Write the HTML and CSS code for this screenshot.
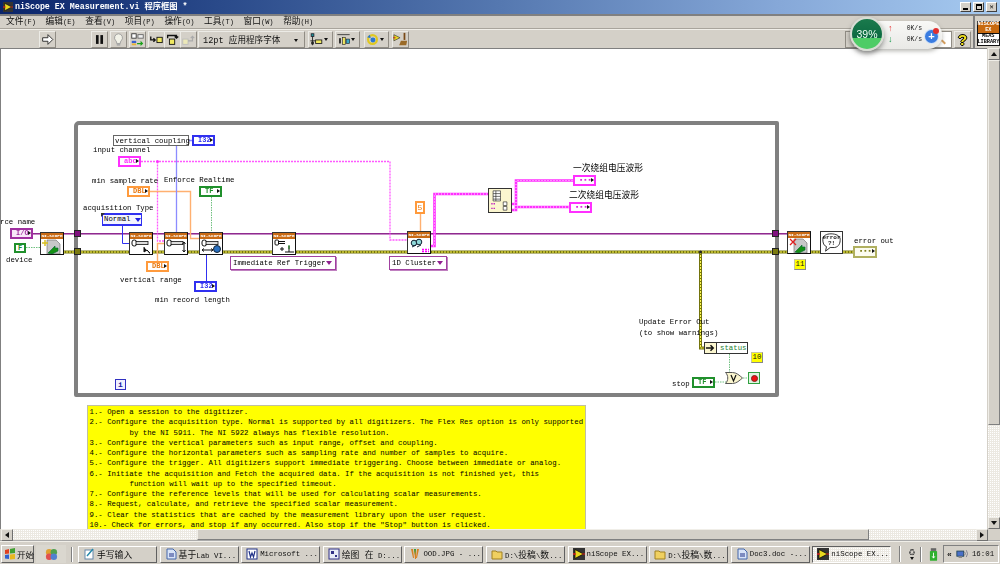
FILE: index.html
```html
<!DOCTYPE html>
<html lang="zh">
<head>
<meta charset="utf-8">
<title>niScope EX Measurement.vi 程序框图 *</title>
<link rel="stylesheet" href="styles.css">
</head>
<body>
<svg class="defs" width="0" height="0" aria-hidden="true">
  <symbol id="lv" viewBox="0 0 12 12"><rect width="12" height="12" fill="#333"/><path d="M2 1.500 10.500 6 2 10.500z" fill="#e8d820" stroke="#000" stroke-width=".7"/><path d="M0 6h3" stroke="#e02020" stroke-width="1.400"/><path d="M9 6h3" stroke="#e02020"/></symbol>
  <symbol id="key" viewBox="0 0 21 15"><rect x="1" y="1" width="4.500" height="6" rx="2" fill="#fff" stroke="#111"/><rect x="5" y="2.400" width="12" height="3.200" fill="#ddd" stroke="#111" stroke-width=".8"/></symbol>
  <symbol id="doc" viewBox="0 0 21 15"><path d="M5 1h9l4 4v10H5z" fill="#c8c8c8" stroke="#666" stroke-width=".6"/><path d="M6 14 13 7v2h3v3l-6 3z" fill="#149014" stroke="#063" stroke-width=".6"/></symbol>
</svg>

<header class="titlebar">
  <svg class="title-icon"><use href="#lv"/></svg>
  <span class="title-text">niScope EX Measurement.vi 程序框图 *</span>
  <div class="win-btns">
    <span class="win-btn"><i class="g-min"></i></span>
    <span class="win-btn"><i class="g-max"></i></span>
    <span class="win-btn g-x">✕</span>
  </div>
</header>

<div class="chrome">
  <div class="chrome-main">
    <nav class="menubar">
      <span>文件<small>(F)</small></span><span>编辑<small>(E)</small></span><span>查看<small>(V)</small></span><span>项目<small>(P)</small></span><span>操作<small>(O)</small></span><span>工具<small>(T)</small></span><span>窗口<small>(W)</small></span><span>帮助<small>(H)</small></span>
    </nav>
    <div class="toolbar">
      <button class="tb tb-run"><svg viewBox="0 0 17 17"><path d="M3 6.500h6V3l5.500 5.500L9 14v-3.500H3z" fill="#fff" stroke="#222"/></svg></button>
      <button class="tb tb-pause"><svg viewBox="0 0 17 17"><rect x="4.500" y="3.500" width="3" height="10" fill="#111"/><rect x="9.500" y="3.500" width="3" height="10" fill="#111"/></svg></button>
      <button class="tb"><svg viewBox="0 0 17 17"><path d="M8.500 2a4.600 4.600 0 0 0-3 8c.8.800 1 1.500 1 3h4c0-1.500.2-2.200 1-3a4.600 4.600 0 0 0-3-8z" fill="#f2f2e8" stroke="#999"/><rect x="6.500" y="13" width="4" height="2.500" fill="#aaa"/></svg></button>
      <button class="tb"><svg viewBox="0 0 17 17"><rect x="2" y="2" width="5" height="5" fill="#fff" stroke="#333"/><rect x="9" y="3" width="6" height="4" fill="#eee" stroke="#666"/><rect x="2" y="10" width="5" height="2.500" fill="#3a60d0"/><rect x="2" y="13" width="5" height="2" fill="#e8b030"/><path d="M8 12.500h4V10l3 3-3 3v-2H8z" fill="#18a018"/></svg></button>
      <div class="tb-group">
        <button class="tb"><svg viewBox="0 0 17 17"><path d="M2 5v4h5M5 7l2 2-2 2" fill="none" stroke="#111" stroke-width="1.500"/><rect x="9" y="6" width="6" height="6" fill="#f0e860" stroke="#111"/></svg></button>
        <button class="tb"><svg viewBox="0 0 17 17"><path d="M3 7V4h10v3M11 5l2 2 2-2" fill="none" stroke="#111" stroke-width="1.500"/><rect x="5" y="8" width="6" height="6" fill="#f0e860" stroke="#111"/></svg></button>
        <button class="tb"><svg viewBox="0 0 17 17"><rect x="2" y="8" width="6" height="6" fill="#ece8b8" stroke="#bbb"/><path d="M8 10h5V5M11 7l2-2 2 2" fill="none" stroke="#aaa" stroke-width="1.300"/></svg></button>
      </div>
      <div class="font-ring"><span>12pt 应用程序字体</span><i class="caret"></i></div>
      <button class="tb tb-wide tb-align"><svg viewBox="0 0 16 17"><rect x="2" y="2" width="3" height="3" fill="#1aa0a0" stroke="#223"/><path d="M3.500 5v10M1 10h13" stroke="#222"/><rect x="2" y="11" width="3" height="3" fill="#222"/><rect x="7" y="9" width="7" height="4" fill="#f0e860" stroke="#222"/></svg><i class="caret"></i></button>
      <button class="tb tb-wide"><svg viewBox="0 0 16 17"><path d="M1 3h14" stroke="#333"/><rect x="3" y="7" width="2" height="6" fill="#222"/><rect x="7" y="6" width="3" height="8" fill="#f0e860" stroke="#222" stroke-width=".7"/><rect x="11" y="8" width="4" height="5" fill="#3aa8c8" stroke="#222" stroke-width=".7"/></svg><i class="caret"></i></button>
      <button class="tb tb-wide tb-order"><svg viewBox="0 0 16 17"><circle cx="8" cy="8.500" r="5" fill="none" stroke="#e0c820" stroke-width="2.500"/><circle cx="8.500" cy="9" r="2.800" fill="#2a78d0"/><path d="M2 6 5 3 6 7z" fill="#2a78d0"/></svg><i class="caret"></i></button>
      <button class="tb"><svg viewBox="0 0 17 17"><path d="M1 3 8 6.500 1 10z" fill="#e8d820" stroke="#333" stroke-width=".7"/><path d="M0 6.500h3" stroke="#d02020"/><path d="M13 1v8" stroke="#7a4a18" stroke-width="2"/><path d="M7 15l2-5h7l-1 5z" fill="#9a6a28"/></svg></button>
      <div class="search-box"></div>
      <button class="tb tb-help">?</button>
    </div>
  </div>
  <div class="conpane">
    <div class="conpane-top">NISCOPE<br>EX</div>
    <div class="conpane-bot">MEAS<br>LIBRARY</div>
  </div>
</div>

<div class="work">
  <main class="canvas">
    <div class="loop"></div>

    <svg class="wires" viewBox="0 48 987 481">
      <path class="w-session" d="M33 233.500H787"/>
      <path class="w-session-lo" d="M33 234.500H787"/>
      <path class="w-err" d="M63 252H820M843 252H853M700.500 252V348H704"/>
      <path class="w-err-dot" d="M63 252H820M843 252H853M700.500 252V348H704"/>
      <path class="w-pink" d="M141 161.500H390V240H407M157.500 161.500V241H164"/>
      <path class="w-pink-t" d="M430 246H434.500V194H488M511 204H516V180.500H573M511 210H516V207H569"/>
      <path class="w-pink-c" d="M430 246H434.500V194H488M511 204H516V180.500H573M511 210H516V207H569"/>
      <path class="w-orange" d="M150 191.500H190.500V238.500H199M164 243.500H157.500V261M420.500 213V231"/>
      <path class="w-blue" d="M122.500 225V243.500H129M206.500 254V281"/>
      <path class="w-blue-l" d="M176.500 146V232M189 140.500H192"/>
      <path class="w-green" d="M26 247.500H40M211.500 197V232M729.500 354V373M715 382H726M743 378H748"/>
      <circle class="w-dot" cx="157.500" cy="161.500" r="1.500"/>
      <circle class="w-dot-err" cx="700.500" cy="252" r="1.500"/>
    </svg>

    <i class="tunnel tunnel-p tl-1"></i><i class="tunnel tunnel-e tl-2"></i>
    <i class="tunnel tunnel-p tl-3"></i><i class="tunnel tunnel-e tl-4"></i>

    <div class="node n-open"><div class="node-head">NI-SCOPE</div><svg class="node-ico"><use href="#doc"/><path d="M3 1v6M0 4h6" stroke="#d8c020" stroke-width="1.500"/></svg></div>
    <div class="node n-acq"><div class="node-head">NI-SCOPE</div><svg class="node-ico"><use href="#key"/><path d="M13 8v5l3-2 3 3h-1" fill="#111" stroke="#111"/></svg></div>
    <div class="node n-vert"><div class="node-head">NI-SCOPE</div><svg class="node-ico"><use href="#key"/><path d="M18 3v10M16.500 5 18 3l1.500 2M16.500 11 18 13l1.500-2" fill="none" stroke="#111"/></svg></div>
    <div class="node n-hor"><div class="node-head">NI-SCOPE</div><svg class="node-ico"><use href="#key"/><path d="M1 11h11M3 9.500 1 11l2 1.500M10 9.500l2 1.500-2 1.500" fill="none" stroke="#111"/><circle cx="16" cy="10" r="3.500" fill="#2a70c0" stroke="#123"/></svg></div>
    <div class="node n-trig"><div class="node-head">NI-SCOPE</div><svg class="node-ico"><rect x="1" y="1" width="3.500" height="5" rx="1" fill="#fff" stroke="#111"/><path d="M4 2.500h7M4 4.500h7" stroke="#111"/><path d="M6 10h4M8 8v4" stroke="#111"/><path d="M11 13h4V7M15 13h5" fill="none" stroke="#111"/><path d="M15 6v4" stroke="#108010"/></svg></div>
    <div class="node n-fetch"><div class="node-head">NI-SCOPE</div><svg class="node-ico"><circle cx="5" cy="5" r="2.800" fill="#8fd8d8" stroke="#123"/><circle cx="10" cy="4" r="2.800" fill="#8fd8d8" stroke="#123"/><path d="M3 9 7 7M8 9l4-2" stroke="#123"/><path d="M13 11.500h7M13 13.500h7" stroke="#f0f" stroke-width="1.500" stroke-dasharray="2 1"/></svg></div>
    <div class="node n-close"><div class="node-head">NI-SCOPE</div><svg class="node-ico"><use href="#doc"/><path d="M1 1l6 6M7 1 1 7" stroke="#e02020" stroke-width="1.300"/></svg></div>

    <div class="errh"><svg viewBox="0 0 23 23"><path d="M2 8c0-4 4-6 9-6s10 2 10 6-1 8-6 9l-5 0-5 4 1-5c-3-1-4-4-4-8z" fill="#fff" stroke="#222"/></svg><span class="errh-text">error<br>?!</span></div>

    <div class="bundle">
      <svg viewBox="0 0 23 25"><path d="M4 2h8v11H4zM4 5h8M4 8h8M4 11h8M7 2v11" fill="#fff" stroke="#222" stroke-width=".7"/><path d="M2 16h4M2 21h4" stroke="#c020c0" stroke-width="1.500" stroke-dasharray="1.500 1"/><path d="M15 14h4v4h-4zM15 19h4v4h-4z" fill="#fff" stroke="#222" stroke-width=".7"/></svg>
    </div>

    <div class="term t-io l-io">I/O</div>
    <div class="cbool l-f">F</div>
    <div class="term t-str l-chan">abc</div>
    <div class="term t-dbl l-rate">DBL</div>
    <div class="term t-tf l-enf">TF</div>
    <div class="term t-dbl l-range">DBL</div>
    <div class="term t-i32 l-coupi notched">I32</div>
    <div class="term t-i32 l-recl">I32</div>
    <div class="term t-wave l-w1">▪▪▪</div>
    <div class="term t-wave l-w2">▪▪▪</div>
    <div class="term t-err l-errout">▪▪▪</div>
    <div class="term t-tf l-stop">TF</div>

    <div class="coupling">vertical coupling</div>
    <div class="enum-blue notched"><span>Normal</span><i class="tri-blue"></i></div>
    <div class="ring-purple r-trig"><span>Immediate Ref Trigger</span><i class="tri-purple"></i></div>
    <div class="ring-purple r-clus"><span>1D Cluster</span><i class="tri-purple"></i></div>
    <div class="const5">5</div>

    <div class="step s-11">11</div>
    <div class="step s-10">10</div>
    <div class="iter">i</div>

    <div class="unbundle"><span class="ub-arrow"><svg viewBox="0 0 12 10"><path d="M1 5h7M6 2l3 3-3 3" fill="none" stroke="#111" stroke-width="1.600"/></svg></span><span class="ub-status">status</span></div>
    <svg class="orgate" viewBox="0 0 18 12"><path d="M.5.500h7c4 0 7 3 10 5.500-3 2.500-6 5.500-10 5.500h-7c3-3 3-8 0-11z" fill="#fbf6cf" stroke="#555"/><path d="M6 3l2.500 6L11 3" fill="none" stroke="#111" stroke-width="1.200"/></svg>
    <div class="stopind"><i></i></div>

    <span class="lbl a-rce">rce name</span>
    <span class="lbl a-dev">device</span>
    <span class="lbl a-chan">input channel</span>
    <span class="lbl a-rate">min sample rate</span>
    <span class="lbl a-enf">Enforce Realtime</span>
    <span class="lbl a-acq">acquisition Type</span>
    <span class="lbl a-vr">vertical range</span>
    <span class="lbl a-rec">min record length</span>
    <span class="lbl lbl-cjk a-w1">一次绕组电压波形</span>
    <span class="lbl lbl-cjk a-w2">二次绕组电压波形</span>
    <span class="lbl a-eo">error out</span>
    <span class="lbl a-up">Update Error Out<br>(to show warnings)</span>
    <span class="lbl a-stop">stop</span>

    <div class="note">
      <p>1.- Open a session to the digitizer.</p>
      <p>2.- Configure the acquisition type. Normal is supported by all digitizers. The Flex Res option is only supported</p>
      <p class="ind">by the NI 5911. The NI 5922 always has flexible resolution.</p>
      <p>3.- Configure the vertical parameters such as input range, offset and coupling.</p>
      <p>4.- Configure the horizontal parameters such as sampling rate and number of samples to acquire.</p>
      <p>5.- Configure the trigger. All digitizers support immediate triggering. Choose between immediate or analog.</p>
      <p>6.- Initiate the acquisition and Fetch the acquired data. If the acquisition is not finished yet, this</p>
      <p class="ind">function will wait up to the specified timeout.</p>
      <p>7.- Configure the reference levels that will be used for calculating scalar measurements.</p>
      <p>8.- Request, calculate, and retrieve the specified scalar measurement.</p>
      <p>9.- Clear the statistics that are cached by the measurement library upon the user request.</p>
      <p>10.- Check for errors, and stop if any occurred. Also stop if the "Stop" button is clicked.</p>
    </div>
  </main>
  <aside class="vscroll">
    <button class="sb-btn"><i class="tri tri-up"></i></button>
    <div class="sb-thumb-v"></div>
    <div class="sb-track"></div>
    <button class="sb-btn"><i class="tri tri-down"></i></button>
  </aside>
</div>

<div class="hscroll">
  <button class="sb-btn"><i class="tri tri-left"></i></button>
  <div class="sb-track t-left"></div>
  <div class="sb-thumb-h"></div>
  <div class="sb-track t-right"></div>
  <button class="sb-btn"><i class="tri tri-right"></i></button>
  <div class="sb-corner"></div>
</div>

<footer class="taskbar">
  <button class="start"><svg viewBox="0 0 12 12"><path d="M1 2l4-1v4.500l-4 .5z" fill="#e04020"/><path d="M6 1l5-1v5l-5 .5z" fill="#40a030"/><path d="M1 7l4-.5V11l-4-.5z" fill="#3060d0"/><path d="M6 6.500l5-.5v5l-5 .5z" fill="#e8b820"/></svg>开始</button>
  <div class="quick"><svg viewBox="0 0 14 14"><circle cx="4.500" cy="4.500" r="3.500" fill="#e0a030"/><circle cx="9.500" cy="4.500" r="3.500" fill="#50a050"/><circle cx="4.500" cy="9.500" r="3.500" fill="#e05050"/><circle cx="9.500" cy="9.500" r="3.500" fill="#5080d0"/></svg></div>
  <i class="task-sep"></i>
  <button class="task"><svg viewBox="0 0 12 12"><rect x="2" y="2" width="8" height="9" fill="#fff" stroke="#68a"/><path d="M4 8l6-7" stroke="#28a" stroke-width="1.400"/></svg><span><b>手写输入</b></span></button>
  <button class="task"><svg viewBox="0 0 12 12"><path d="M2 1h6l3 3v7H2z" fill="#d8e4f8" stroke="#46a"/><path d="M4 6h5M4 8h5" stroke="#238"/></svg><span><b>基于</b>Lab VI...</span></button>
  <button class="task"><svg viewBox="0 0 12 12"><rect x="1" y="1" width="10" height="10" fill="#fff" stroke="#238"/><path d="M3 3l1.500 6L6 5l1.500 4L9 3" fill="none" stroke="#238" stroke-width="1.200"/></svg><span>Microsoft ...</span></button>
  <button class="task"><svg viewBox="0 0 12 12"><rect x="1" y="1" width="10" height="10" fill="#e8ecf8" stroke="#338"/><path d="M3 3h3v3H3zM7 7h2v2H7z" fill="#338"/></svg><span><b>绘图 在</b> D:...</span></button>
  <button class="task"><svg viewBox="0 0 12 12"><path d="M2 1l2 9h1L4 1zM5 1l1 10h1V1zM8 1 7 10h1l2-9z" fill="#d88020"/><path d="M5 1l1 6 1-6" fill="#30a040"/></svg><span>OOD.JPG - ...</span></button>
  <button class="task"><svg viewBox="0 0 12 12"><path d="M1 3h4l1 1h5v7H1z" fill="#f0d060" stroke="#a08020"/></svg><span>D:\<b>投稿</b>\<b>数</b>...</span></button>
  <button class="task"><svg><use href="#lv"/></svg><span>niScope EX...</span></button>
  <button class="task"><svg viewBox="0 0 12 12"><path d="M1 3h4l1 1h5v7H1z" fill="#f0d060" stroke="#a08020"/></svg><span>D:\<b>投稿</b>\<b>数</b>...</span></button>
  <button class="task"><svg viewBox="0 0 12 12"><path d="M2 1h6l3 3v7H2z" fill="#d8e4f8" stroke="#46a"/><path d="M4 6h5M4 8h5" stroke="#238"/></svg><span>Doc3.doc -...</span></button>
  <button class="task task-active"><svg><use href="#lv"/></svg><span>niScope EX...</span></button>
  <i class="task-sep sep-r"></i>
  <div class="tray-mid"><span class="tm-a">♻</span><i class="caret"></i></div>
  <i class="task-sep sep-s"></i>
  <svg class="usb" viewBox="0 0 10 14"><rect x="2" y="0" width="6" height="3" fill="#666"/><rect x="1" y="3" width="8" height="11" rx="1" fill="#30b030"/><path d="M5 5v6M3.500 9 5 11l1.500-2" fill="none" stroke="#fff"/></svg>
  <div class="tray">
    <span class="tray-more">«</span>
    <svg class="tray-net" viewBox="0 0 14 12"><rect x="1" y="2" width="8" height="6" fill="#4a70c8" stroke="#245"/><rect x="3" y="8" width="4" height="2" fill="#888"/><path d="M10 3q2 2 0 4M12 1q3 4 0 8" fill="none" stroke="#778"/></svg>
    <span class="clock">16:01</span>
  </div>
</footer>

<aside class="meter">
  <div class="meter-rows">
    <div class="meter-row"><b class="up">↑</b><span>0K/s</span></div>
    <div class="meter-row"><b class="down">↓</b><span>0K/s</span></div>
  </div>
  <div class="meter-ball"><span>39%</span></div>
  <div class="meter-plus">+</div>
  <i class="meter-dot"></i>
</aside>
</body>
</html>
```
FILE: styles.css
```css
* { box-sizing: border-box; }
html, body { margin: 0; height: 564px; width: 1000px; overflow: hidden; }
body { background: #d4d0c8; font-family: "Liberation Mono", "Noto Sans CJK SC", monospace; display: flex; flex-direction: column; position: relative; color: #111; filter: blur(.3px); }
.defs { position: absolute; }
button { font: inherit; padding: 0; margin: 0; background: #d4d0c8; color: inherit; }

/* title bar */
.titlebar { height: 14px; flex: none; display: flex; align-items: center; background: linear-gradient(90deg, #0a246a 0%, #2a4a8a 22%, #5578b0 50%, #86a8d8 78%, #a6caf0 100%); padding-left: 3px; position: relative; }
.title-icon { width: 10px; height: 10px; flex: none; }
.title-text { color: #fff; font-weight: bold; font-size: 8.300px; margin-left: 2px; white-space: pre; line-height: 14px; }
.win-btns { margin-left: auto; display: flex; gap: 1px; margin-right: 3px; }
.win-btn { width: 11px; height: 10px; background: #d4d0c8; border: 1px solid; border-color: #fff #404040 #404040 #fff; display: flex; align-items: center; justify-content: center; font-size: 7px; font-weight: bold; color: #000; overflow: hidden; position: relative; }
.win-btn:nth-child(2) { margin-left: 1px; margin-right: 1px; }
.g-min { width: 5px; height: 2px; background: #000; margin-top: 4px; }
.g-max { width: 6px; height: 6px; border: 1px solid #000; border-top-width: 2px; }

/* menu and toolbar */
.chrome { height: 34px; flex: none; display: flex; border-top: 2px solid #808080; }
.chrome-main { flex: 1; display: flex; flex-direction: column; min-width: 0; }
.menubar { height: 13px; display: flex; padding-left: 6px; font-size: 8.700px; line-height: 12px; border-bottom: 1px solid #a8a49c; flex: none; color: #111; }
.menubar span { width: 39.600px; flex: none; white-space: nowrap; }
.menubar small { font-size: 7px; }
.toolbar { height: 19px; display: flex; align-items: center; padding-left: 39px; border-top: 1px solid #f0eee8; flex: none; }
.tb { width: 17px; height: 17px; border: 1px solid; border-color: #ecebe6 #908c84 #908c84 #ecebe6; display: flex; align-items: center; justify-content: flex-start; flex: none; overflow: hidden; margin-right: 2px; }
.tb svg { width: 15px; height: 15px; flex: none; }
.tb-pause { margin-left: 33px; }
.tb-group { display: flex; flex: none; margin-right: 2px; }
.tb-group .tb { margin-right: -1px; width: 17px; }
.font-ring { width: 107px; height: 17px; flex: none; display: flex; align-items: center; border: 1px solid; border-color: #ecebe6 #908c84 #908c84 #ecebe6; margin-right: 3px; font-size: 8.600px; padding-left: 4px; position: relative; }
.font-ring span { white-space: nowrap; }
.caret { display: block; width: 0; height: 0; border: 2.500px solid transparent; border-top: 3px solid #111; border-bottom: 0; flex: none; }
.font-ring .caret { position: absolute; right: 6px; top: 7px; }
.tb-wide { width: 25px; }
.tb-wide .caret { margin-left: 0; margin-top: 1px; }
.tb-order { margin-left: 2px; margin-right: 3px; }
.search-box { width: 107px; height: 17px; margin-left: auto; background: linear-gradient(90deg, #d4d0c8 0 8px, #fff 8px); border: 1px solid #908c84; flex: none; margin-right: 2px; position: relative; }
.search-box::after { content: ""; position: absolute; right: 5px; top: 9px; width: 5px; height: 2px; background: #d8a060; transform: rotate(45deg); }
.tb-help { font-family: "Liberation Sans", sans-serif; font-weight: bold; font-size: 15px; color: #f0e020; text-shadow: 1px 0 #000, -1px 0 #000, 0 1px #000, 0 -1px #000; justify-content: center; margin-right: 2px; }
.conpane { width: 27px; flex: none; border-left: 2px solid #808080; padding: 5px 0 0 1.500px; font-weight: bold; font-size: 5.200px; line-height: 5.500px; text-align: center; }
.conpane-top { height: 12px; width: 23.500px; background: #c86a10; color: #fff; border: 1px solid #111; border-bottom: 0; }
.conpane-bot { height: 13px; width: 23.500px; background: #fff; color: #000; border: 1px solid #111; }

/* workspace */
.work { flex: none; height: 481px; display: flex; }
.canvas { width: 987px; flex: none; position: relative; background: #fff; overflow: hidden; box-shadow: inset 1px 1px 0 #808080; }
.wires { position: absolute; left: 0; top: 0; width: 987px; height: 481px; z-index: 2; }
.wires path { fill: none; }
.w-session { stroke: #8f2a8f; stroke-width: 1; }
.w-session-lo { stroke: #c48ac4; stroke-width: 1; }
.w-err { stroke: #74740c; stroke-width: 3; }
.w-err-dot { stroke: #fffa50; stroke-width: 1; stroke-dasharray: 2 1; }
.w-pink { stroke: #ff58ff; stroke-width: 1.300; stroke-dasharray: 2 1; }
.w-pink-t { stroke: #ff30ff; stroke-width: 2.600; }
.w-pink-c { stroke: #ffe0ff; stroke-width: 1; stroke-dasharray: 1 2; }
.w-orange { stroke: #ffb070; stroke-width: 1.400; }
.w-blue { stroke: #3030f0; stroke-width: 1; }
.w-blue-l { stroke: #8c8cff; stroke-width: 1.300; }
.w-green { stroke: #70c080; stroke-width: 1; stroke-dasharray: 1.500 1; }
.w-dot { fill: #ff30ff; }
.w-dot-err { fill: #222; }

/* while loop frame, coordinates relative to canvas at y = 48 */
.loop { position: absolute; left: 74px; top: 73px; width: 705px; height: 276px; border: 4px solid #808080; border-radius: 5px 2px 2px 2px; }
.tunnel { position: absolute; width: 7px; height: 7px; z-index: 3; border: 1px solid #222; }
.tunnel-p { background: #80107f; }
.tunnel-e { background: #7a7a10; }
.tl-1 { left: 74px; top: 182px; }
.tl-2 { left: 74px; top: 200px; }
.tl-3 { left: 772px; top: 182px; }
.tl-4 { left: 772px; top: 200px; }

/* sub-VI nodes */
.node { position: absolute; width: 24px; height: 23px; border: 1px solid #333; border-right-color: #111; border-bottom-color: #111; background: #fff; z-index: 3; }
.node-head { height: 6px; background: #c96a14; color: #fff; font-size: 4.400px; font-weight: bold; line-height: 6px; text-align: center; white-space: nowrap; overflow: hidden; }
.node-ico { display: block; width: 21px; height: 15px; margin: 0 auto; }
.n-open { left: 40px; top: 184px; }
.n-acq { left: 129px; top: 184px; }
.n-vert { left: 164px; top: 184px; }
.n-hor { left: 199px; top: 184px; }
.n-trig { left: 272px; top: 184px; }
.n-fetch { left: 407px; top: 183px; }
.n-close { left: 787px; top: 183px; }
.errh { position: absolute; left: 820px; top: 183px; width: 23px; height: 23px; border: 1px solid #333; background: #fff; z-index: 3; }
.errh svg { position: absolute; inset: 0; width: 21px; height: 21px; }
.errh-text { position: absolute; left: 0; right: 0; top: 3px; font-size: 6px; line-height: 6px; text-align: center; font-weight: bold; }
.bundle { position: absolute; left: 488px; top: 140px; width: 24px; height: 25px; background: #fbf6cf; border: 1px solid #333; z-index: 3; }
.bundle svg { display: block; width: 22px; height: 23px; }

/* terminals */
.term { position: absolute; width: 23px; height: 11px; border: 2px solid; background: #fff; font-size: 7px; line-height: 7px; font-weight: bold; padding-left: 4px; white-space: nowrap; overflow: hidden; z-index: 3; }
.term::after { content: ""; position: absolute; right: 0; top: 1px; width: 0; height: 0; border: 2.500px solid transparent; border-right: 0; border-left: 3px solid #111; }
.notched::before { content: ""; position: absolute; left: -2px; top: -2px; width: 0; height: 0; border: 2.500px solid transparent; border-left-color: #333; border-top-color: #333; }
.t-io { border-color: #a030a0; color: #a030a0; background: #f8e8f8; }
.t-str { border-color: #ff30ff; color: #ff30ff; }
.t-dbl { border-color: #ff9a3c; color: #e87810; }
.t-tf { border-color: #20902c; color: #20902c; }
.t-i32 { border-color: #3030f0; color: #3030f0; }
.t-wave { border-color: #ff30ff; color: #e020e0; }
.t-err { border-color: #b0b060; color: #808020; background: #fcfcf0; }
.l-io { left: 10px; top: 180px; }
.l-chan { left: 118px; top: 108px; }
.l-rate { left: 127px; top: 138px; }
.l-enf { left: 199px; top: 138px; }
.l-range { left: 146px; top: 213px; }
.l-coupi { left: 192px; top: 87px; }
.l-recl { left: 194px; top: 233px; }
.l-w1 { left: 573px; top: 127px; }
.l-w2 { left: 569px; top: 154px; }
.l-errout { left: 853px; top: 198px; width: 24px; height: 12px; }
.l-stop { left: 692px; top: 329px; }
.cbool { position: absolute; left: 14px; top: 195px; width: 12px; height: 10px; border: 2px solid #20902c; color: #20902c; font-size: 7px; line-height: 6px; font-weight: bold; text-align: center; background: #fff; z-index: 3; }

.coupling { position: absolute; left: 113px; top: 87px; width: 76px; height: 11px; border: 1px solid #666; background: #fff; font-size: 7.350px; line-height: 10px; padding-left: 1px; white-space: nowrap; color: #000; z-index: 3; }
.enum-blue { position: absolute; left: 102px; top: 165px; width: 40px; height: 13px; border: 2px solid #3030f0; border-width: 2px 1.500px; background: #f4f4ff; font-size: 7.350px; line-height: 9px; display: flex; padding-left: 1px; color: #000; z-index: 3; }
.tri-blue { width: 0; height: 0; border: 3px solid transparent; border-top: 4px solid #2020e0; border-bottom: 0; margin: 3px 0 0 auto; }
.ring-purple { position: absolute; height: 14px; border: 1px solid #a040a0; box-shadow: 1px 1px 0 #c080c0; background: #fff; font-size: 7.350px; line-height: 12px; display: flex; padding: 0 3px 0 2px; white-space: nowrap; color: #000; z-index: 3; }
.tri-purple { width: 0; height: 0; border: 3px solid transparent; border-top: 4px solid #902090; border-bottom: 0; margin: 4px 0 0 auto; }
.r-trig { left: 230px; top: 208px; width: 106px; }
.r-clus { left: 389px; top: 208px; width: 58px; }
.const5 { position: absolute; left: 415px; top: 153px; width: 10px; height: 13px; border: 2px solid #ff9a3c; background: #fff; font-size: 8px; line-height: 9px; text-align: center; color: #e87810; z-index: 3; }
.step { position: absolute; height: 11px; width: 12px; background: #ffff00; border: 1px solid #c8c8a0; border-right-color: #888; border-bottom-color: #888; font-size: 7.350px; line-height: 9px; text-align: center; z-index: 3; }
.s-11 { left: 794px; top: 211px; }
.s-10 { left: 751px; top: 304px; }
.iter { position: absolute; left: 115px; top: 331px; width: 11px; height: 11px; border: 1px solid #3030c0; background: #f0f0ff; color: #2020a0; font-size: 8px; line-height: 9px; text-align: center; font-weight: bold; z-index: 3; }
.unbundle { position: absolute; left: 704px; top: 294px; width: 44px; height: 12px; border: 1px solid #333; display: flex; background: #fff; z-index: 3; }
.ub-arrow { width: 12px; background: #fbf6cf; border-right: 1px solid #333; flex: none; display: flex; }
.ub-arrow svg { width: 11px; height: 10px; }
.ub-status { color: #1c8030; font-size: 7.350px; line-height: 10px; padding-left: 3px; }
.orgate { position: absolute; left: 725px; top: 324px; width: 18px; height: 12px; z-index: 3; }
.stopind { position: absolute; left: 748px; top: 324px; width: 12px; height: 12px; border: 1px solid #30a040; background: #e0f4e0; display: flex; align-items: center; justify-content: center; z-index: 3; }
.stopind i { width: 7px; height: 7px; border-radius: 50%; background: #f01010; border: 1px solid #802020; }

/* labels */
.lbl { position: absolute; font-size: 7.350px; line-height: 10px; white-space: nowrap; color: #000; z-index: 4; }
.lbl-cjk { font-size: 8.750px; line-height: 11px; }
.a-rce { left: 0; top: 169px; }
.a-dev { left: 6px; top: 207px; }
.a-chan { left: 93px; top: 97px; }
.a-rate { left: 92px; top: 128px; }
.a-enf { left: 164px; top: 127px; }
.a-acq { left: 83px; top: 155px; }
.a-vr { left: 120px; top: 227px; }
.a-rec { left: 155px; top: 247px; }
.a-w1 { left: 573px; top: 116px; }
.a-w2 { left: 569px; top: 143px; }
.a-eo { left: 854px; top: 188px; }
.a-up { left: 639px; top: 269px; line-height: 10.500px; }
.a-stop { left: 672px; top: 331px; }

/* note */
.note { position: absolute; left: 87px; top: 357px; width: 499px; height: 130px; background: #ffff00; border: 1px solid #c0c0a0; padding: 1px 0 0 1.500px; font-size: 7.350px; line-height: 10.250px; white-space: nowrap; color: #000; }
.note p { margin: 0; }
.note .ind { padding-left: 40px; }

/* scrollbars */
.sb-btn { width: 12px; height: 12px; flex: none; border: 1px solid; border-color: #f0eee8 #707070 #707070 #f0eee8; display: flex; align-items: center; justify-content: center; }
.tri { width: 0; height: 0; border: 3px solid transparent; display: block; }
.tri-up { border-bottom: 4px solid #111; border-top: 0; }
.tri-down { border-top: 4px solid #111; border-bottom: 0; }
.tri-left { border-right: 4px solid #111; border-left: 0; }
.tri-right { border-left: 4px solid #111; border-right: 0; }
.vscroll { width: 13px; flex: none; display: flex; flex-direction: column; padding-left: 1px; }
.sb-track { background-color: #ece9e2; background-image: linear-gradient(45deg, #fff 25%, transparent 25%, transparent 75%, #fff 75%); background-size: 2px 2px; flex: 1; }
.sb-thumb-v { height: 365px; flex: none; background: #d4d0c8; border: 1px solid; border-color: #f0eee8 #808080 #808080 #f0eee8; }
.hscroll { height: 12px; flex: none; display: flex; border-bottom: 1px solid #aaa; }
.t-left { flex: none; width: 184px; }
.t-right { flex: none; width: 107px; }
.sb-thumb-h { width: 672px; flex: none; background: #d4d0c8; border: 1px solid; border-color: #f0eee8 #808080 #808080 #f0eee8; }
.sb-corner { flex: 1; background: #d4d0c8; }
.hscroll > .sb-btn:first-child { margin-left: 1px; }

/* task bar */
.taskbar { height: 23px; flex: none; display: flex; align-items: center; padding: 2px 0 0 1px; font-size: 7.400px; border-top: 1px solid #f0eee8; }
.start { width: 33px; height: 18px; border: 1px solid; border-color: #fff #606060 #606060 #fff; display: flex; align-items: center; gap: 1px; padding-left: 2px; font-size: 8.500px; white-space: nowrap; flex: none; }
.start svg { width: 12px; height: 12px; flex: none; }
.quick { width: 30px; height: 18px; margin-left: 2px; background: #dad7cf; display: flex; align-items: center; justify-content: center; flex: none; }
.quick svg { width: 13px; height: 13px; }
.task-sep { width: 2px; height: 15px; flex: none; border-left: 1px solid #808080; border-right: 1px solid #fff; margin: 0 5px; }
.task { width: 79px; height: 17px; margin-right: 2.600px; flex: none; border: 1px solid; border-color: #fff #606060 #606060 #fff; display: flex; align-items: center; gap: 2px; padding-left: 4px; overflow: hidden; white-space: nowrap; font-size: 7.400px; }
.task svg { width: 12px; height: 12px; flex: none; }
.task b { font-weight: normal; font-size: 8.800px; }
.task-active { border-color: #606060 #fff #fff #606060; background-color: #ece9e2; background-image: linear-gradient(45deg, #fff 25%, transparent 25%, transparent 75%, #fff 75%); background-size: 2px 2px; }
.sep-r { margin: 0 8px 0 5px; height: 16px; }
.tray-mid { width: 6px; display: flex; flex-direction: column; align-items: center; flex: none; font-size: 6px; line-height: 8px; color: #444; }
.sep-s { margin: 0 7px 0 5px; }
.usb { width: 9px; height: 13px; flex: none; }
.tray { width: 56px; height: 18px; margin-left: 5px; border: 1px solid; border-color: #808080 #fff #fff #808080; display: flex; align-items: center; padding-left: 3px; flex: none; }
.tray-more { font-size: 8px; font-weight: bold; width: 9px; }
.tray-net { width: 12px; height: 11px; flex: none; }
.clock { margin-left: 4px; font-size: 7.400px; }

/* floating meter */
.meter { position: absolute; left: 851px; top: 21px; width: 91px; height: 28px; border-radius: 14px; background: linear-gradient(#f8f8f6, #e9e9e6); box-shadow: 0 2px 4px rgba(90, 90, 80, .45); z-index: 20; }
.meter-rows { position: absolute; left: 37px; top: 2px; width: 34px; font-size: 6.400px; line-height: 11px; }
.meter-row { display: flex; justify-content: space-between; height: 11px; color: #222; }
.up { color: #e83838; font: bold 9px/11px "Liberation Sans", sans-serif; }
.down { color: #109848; font: bold 9px/11px "Liberation Sans", sans-serif; }
.meter-ball { position: absolute; left: -1px; top: -4px; width: 34px; height: 34px; border-radius: 50%; border: 2px solid #d8dcd4; background: linear-gradient(#1a7a4c 0, #0c6a42 63%, #4ecc66 63%, #4ecc66 100%); box-shadow: 0 3px 5px rgba(60, 60, 60, .5); display: flex; align-items: center; justify-content: center; }
.meter-ball span { color: #f0fff4; font-family: "Liberation Sans", sans-serif; font-size: 10.500px; margin-top: -1px; }
.meter-plus { position: absolute; left: 74px; top: 9px; width: 13px; height: 13px; border-radius: 50%; background: #3a7ce0; color: #fff; font: bold 11px/13px "Liberation Sans", sans-serif; text-align: center; box-shadow: 0 0 0 1px #cfe0f4; }
.meter-dot { position: absolute; left: 82px; top: 7px; width: 6px; height: 6px; border-radius: 50%; background: #e03030; }
```
